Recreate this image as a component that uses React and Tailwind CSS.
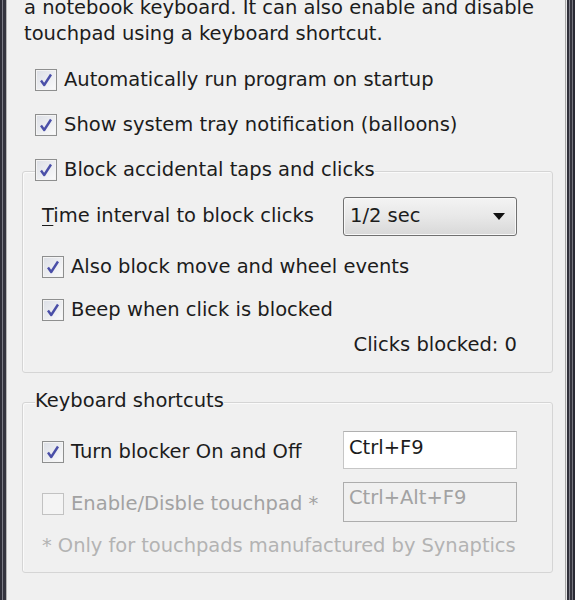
import React from "react";

const font = { fontFamily: '"DejaVu Sans", Verdana, sans-serif' };

function Check({ checked = true, disabled = false }) {
    return (
        <span
            className={
                "flex h-[22px] w-[22px] shrink-0 items-center justify-center border " +
                (disabled
                    ? "border-[#c2c2c2] bg-[#f4f4f4]"
                    : "border-[#8e8f8f] bg-gradient-to-br from-[#dcdfe6] to-[#fbfbfb] shadow-[inset_0_0_0_1px_#f4f4f4]")
            }
        >
            {checked && (
                <svg width="16" height="16" viewBox="0 0 16 16">
                    <path
                        d="M3 8.5 L6.2 13 L13 2.5"
                        fill="none"
                        stroke="#4a4fa8"
                        strokeWidth="2.4"
                        strokeLinejoin="round"
                    />
                </svg>
            )}
        </span>
    );
}

function CheckRow({ label, h = "h-[45px]", disabled = false, checked = true }) {
    return (
        <div className={"flex items-center gap-[7px] " + h}>
            <Check checked={checked} disabled={disabled} />
            <span className={disabled ? "text-[#a2a2a2]" : "text-[#1c1c1c]"}>{label}</span>
        </div>
    );
}

export default function App() {
    return (
        <div
            className="flex h-[600px] w-[575px] overflow-hidden bg-[#f0f0f0] text-[19.5px] leading-[26px] text-[#1c1c1c]"
            style={font}
        >
            {/* left window frame */}
            <div className="flex shrink-0">
                <span className="w-[2px] bg-[#2e2e38]" />
                <span className="w-[1px] bg-[#7c7c86]" />
                <span className="w-[3px] bg-[#34343e]" />
                <span className="w-[1px] bg-[#b4b4b4]" />
            </div>

            {/* client area */}
            <div className="flex-1">
                <p className="-mt-[5px] pl-[17px]">
                    a notebook keyboard. It can also enable and disable
                    <br />
                    touchpad using a keyboard shortcut.
                </p>

                <div className="mt-[10px] pl-[28px]">
                    <CheckRow label="Automatically run program on startup" />
                    <CheckRow label="Show system tray notification (balloons)" />
                </div>

                {/* Block accidental taps group */}
                <fieldset className="ml-[15px] w-[531px] rounded-[3px] border border-[#d5d5d5] pl-[19px] pr-[35px] pb-[13px] shadow-[inset_1px_1px_0_#fafafa]">
                    <legend className="-ml-[7px] flex h-[48px] items-center gap-[7px] bg-[#f0f0f0] pb-[3px]">
                        <Check />
                        <span>Block accidental taps and clicks</span>
                    </legend>

                    <div className="flex h-[42px] items-center justify-between">
                        <span>
                            <span className="underline decoration-1 underline-offset-[3px]">T</span>ime interval to block clicks
                        </span>
                        <div className="flex h-[39px] w-[174px] items-center justify-between rounded-[3px] border border-[#707070] bg-gradient-to-b from-[#f3f3f3] via-[#e8e8e8] to-[#d8d8d8] pl-[6px] pr-[11px] shadow-[inset_0_0_0_1px_#f8f8f8]">
                            <span>1/2 sec</span>
                            <svg width="12" height="7" viewBox="0 0 12 7">
                                <path d="M0 0 H12 L6 7 Z" fill="#111" />
                            </svg>
                        </div>
                    </div>

                    <div className="mt-[8px]">
                        <CheckRow label="Also block move and wheel events" h="h-[43px]" />
                        <CheckRow label="Beep when click is blocked" h="h-[43px]" />
                    </div>

                    <div className="flex h-[28px] items-center justify-end">Clicks blocked: 0</div>
                </fieldset>

                {/* Keyboard shortcuts group */}
                <fieldset className="mt-[14px] ml-[15px] w-[531px] rounded-[3px] border border-[#d5d5d5] pl-[19px] pr-[35px] pb-[12px] shadow-[inset_1px_1px_0_#fafafa]">
                    <legend className="-ml-[7px] flex h-[30px] items-center bg-[#f0f0f0] pb-[3px]">
                        Keyboard shortcuts
                    </legend>

                    <div className="mt-[13px] flex h-[40px] items-center justify-between">
                        <div className="flex items-center gap-[7px] pt-[3px]">
                            <Check />
                            <span>Turn blocker On and Off</span>
                        </div>
                        <div className="flex h-[38px] w-[174px] items-start border border-[#c6c6c6] border-t-[#b0b0b0] bg-white pl-[5px] pt-[3px]">
                            Ctrl+F9
                        </div>
                    </div>

                    <div className="mt-[12px] flex h-[40px] items-center justify-between">
                        <div className="flex items-center gap-[7px] pt-[4px]">
                            <Check checked={false} disabled />
                            <span className="text-[#a2a2a2]">Enable/Disble touchpad *</span>
                        </div>
                        <div className="flex h-[40px] w-[174px] items-start border border-[#adadad] bg-[#f0f0f0] pl-[5px] pt-[2px] text-[#a2a2a2]">
                            Ctrl+Alt+F9
                        </div>
                    </div>

                    <div className="mt-[10px] flex h-[28px] items-center whitespace-nowrap tracking-[-0.05px] text-[#b3b3b3]">
                        * Only for touchpads manufactured by Synaptics
                    </div>
                </fieldset>
            </div>

            {/* right window frame */}
            <div className="flex shrink-0">
                <span className="w-[1px] bg-[#a8a8a8]" />
                <span className="w-[1px] bg-[#e6e6e6]" />
                <span className="w-[2px] bg-[#30303a]" />
                <span className="w-[1px] bg-[#80808a]" />
                <span className="w-[2px] bg-[#34343e]" />
                <span className="w-[1px] bg-[#76767f]" />
                <span className="w-[2px] bg-[#2a2a34]" />
            </div>
        </div>
    );
}
